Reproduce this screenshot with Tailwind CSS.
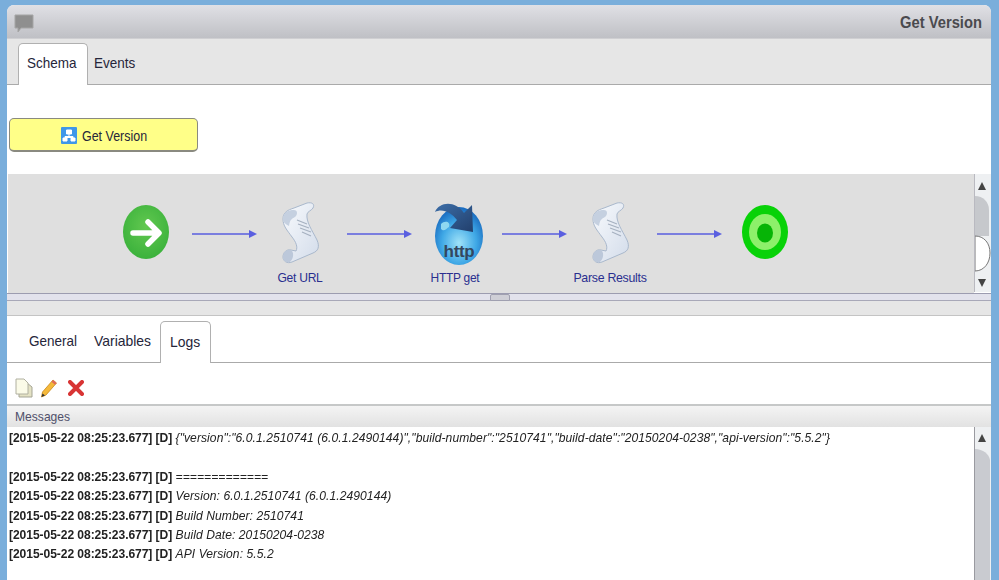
<!DOCTYPE html>
<html lang="en">
<head>
  <meta charset="UTF-8" />
  <title>Get Version</title>
  <script src="https://cdn.jsdelivr.net/npm/@tailwindcss/browser@4"></script>
</head>
<body class="bg-[#7aaedb] h-[580px] w-[999px] overflow-hidden font-['Liberation_Sans',Arial,sans-serif] text-[#25253a]">
  <svg width="0" height="0" class="absolute">
    <defs>
      <linearGradient id="paper" x1="0" y1="0" x2="1" y2="1">
        <stop offset="0" stop-color="#f8fafd" /><stop offset="1" stop-color="#d3dcea" />
      </linearGradient>
      <symbol id="scroll" viewBox="0 0 38 64">
        <path d="M1 17C1 10 6 8 12 6L25 1C30 0 33 2 31 6C29 9 26 9 25 12C24 20 30 28 35 38C38 45 36 49 31 51L10 60C5 62 1 59 1 55C1 50 5 47 9 48L14 49C16 45 14 40 10 35C5 28 1 24 1 17Z" fill="url(#paper)" stroke="#a9b8cc" stroke-width="1" />
        <path d="M1 17C1 10 6 8 12 8C15 8 16 11 14 14C11 17 8 16 7 24C3 22 1 20 1 17Z" fill="#c5d0e0" />
        <path d="M1 55C1 50 5 47 9 48C12 50 12 56 8 60C4 61 1 59 1 55Z" fill="#bcc8da" />
        <path d="M15 18L25 22M16 22L27 26M18 26L29 30M20 30L29 34" stroke="#a6b1c0" stroke-width="1.2" />
      </symbol>
    </defs>
  </svg>

  <!-- window -->
  <div class="ml-[7px] mt-[5px] w-[984px] h-[575px] bg-white rounded-t-[7px] flex flex-col overflow-hidden blur-[0.4px]">
    <div class="h-[34px] shrink-0 bg-gradient-to-b from-[#e0e0e5] to-[#bfc0c5] border-b border-[#cfcfd2] flex items-center justify-between pl-[7px] pr-[9px]">
      <svg width="20" height="19" viewBox="0 0 20 19" class="mt-[3px]"><path d="M1 1H19V14H7L4 18V14H1Z" fill="#8f8f8f" stroke="#a5a5a5" /></svg>
      <span class="text-[16px] font-bold text-[#4a4a4e] pt-[2px] scale-x-[.92] origin-right">Get Version</span>
    </div>

    <!-- top tabs -->
    <div class="h-[45px] shrink-0 bg-[#e6e6e6] border-b border-[#aaaaaa] flex items-end pl-[11px] box-content text-[14.5px]">
      <div class="h-[42px] w-[70px] bg-white border border-b-0 border-[#b0b0b0] rounded-t-[5px] flex items-center pl-[8px] pb-[2px] -mb-px"><span class="scale-x-[.93] origin-left">Schema</span></div>
      <div class="h-[41px] pl-[6px] flex items-center"><span class="scale-x-[.93] origin-left">Events</span></div>
    </div>

    <!-- button area -->
    <div class="h-[89px] shrink-0 pl-[2px] pt-[33px]">
      <div class="w-[189px] h-[34px] bg-[#ffff88] border border-[#8a8a80] border-b-2 rounded-[5px] flex items-center justify-center gap-[5px] text-[14px] pt-[2px]">
        <svg width="16" height="17" viewBox="0 0 16 17">
          <rect width="16" height="17" rx="1" fill="#3f97e8" />
          <path d="M5.5 3H10.5V7H5.5ZM2 11H6V14H2ZM10 11H14V14H10ZM8 7V9.5M4 11V9.5H12V11" fill="#fff" stroke="#fff" stroke-width="1" />
        </svg>
        <span class="w-[64px] whitespace-nowrap scale-x-[.89] origin-left pt-[1px]">Get Version</span>
      </div>
    </div>

    <!-- schema diagram -->
    <div class="h-[120px] shrink-0 flex pl-px border-b border-[#9c9cb0]">
      <div class="relative w-[966px] bg-[#dfdfdf] text-[13px] tracking-[-.3px] text-[#2a2f8f]">
        <svg class="absolute left-0 top-0" width="966" height="119" viewBox="0 0 966 119">
          <defs>
            <radialGradient id="startFill" cx=".5" cy=".4" r=".65"><stop offset="0" stop-color="#62c850" /><stop offset="1" stop-color="#38b03a" /></radialGradient>
            <radialGradient id="globe" cx=".5" cy=".62" r=".6"><stop offset="0" stop-color="#9fe2f8" /><stop offset=".6" stop-color="#3fa8e6" /><stop offset="1" stop-color="#1a6cc0" /></radialGradient>
            <linearGradient id="swoosh" x1="0" y1="0" x2="1" y2="1"><stop offset="0" stop-color="#3c6ea8" /><stop offset="1" stop-color="#223f6c" /></linearGradient>
          </defs>
          <!-- start -->
          <ellipse cx="138" cy="58" rx="23" ry="27" fill="url(#startFill)" />
          <path d="M125 59H149M140 48L151 59L140 70" fill="none" stroke="#fff" stroke-width="5.5" stroke-linecap="round" stroke-linejoin="round" />
          <!-- arrows -->
          <g stroke="#5a5fe0" stroke-width="1.3"><path d="M184 60H243M339 60H398M494 60H553M649 60H708" /></g>
          <g fill="#5a5fe0"><path d="M241 56L249 60L241 64ZM396 56L404 60L396 64ZM551 56L559 60L551 64ZM706 56L714 60L706 64Z" /></g>
          <!-- scrolls -->
          <use href="#scroll" x="274" y="28" width="38" height="64" />
          <use href="#scroll" x="584" y="28" width="38" height="64" />
          <!-- http globe -->
          <ellipse cx="451" cy="62" rx="24" ry="29" fill="url(#globe)" />
          <path d="M433 50C437 46 443 48 441 53C438 55 436 58 433 55Z" fill="#8fd8f0" />
          <path d="M427 38C431 28 447 26 456 39L464 31L465 58L442 54L449 46C443 38 434 34 427 38Z" fill="url(#swoosh)" />
          <text x="451" y="83" text-anchor="middle" font-family="Liberation Sans" font-weight="700" font-size="17" fill="#33475f">http</text>
          <!-- end -->
          <ellipse cx="757" cy="58" rx="23" ry="27" fill="#08d208" />
          <ellipse cx="757" cy="58" rx="16" ry="18" fill="#8df06a" />
          <ellipse cx="757" cy="59" rx="8" ry="9.5" fill="#06b406" />
        </svg>
        <span class="absolute left-[242px] w-[100px] top-[94px] text-center scale-x-[.93]">Get URL</span>
        <span class="absolute left-[397px] w-[100px] top-[94px] text-center scale-x-[.92]">HTTP get</span>
        <span class="absolute left-[552px] w-[100px] top-[94px] text-center scale-x-[.95]">Parse Results</span>
      </div>
      <!-- scrollbar -->
      <svg width="16" height="118" viewBox="0 0 16 118" class="bg-[#eef0f2] border-l border-[#b9b9c0] box-content">
        <path d="M4 7L8 15H0Z" transform="translate(3 1)" fill="#444" />
        <path d="M0 22C8 22 14 28 14 36V62H0Z" fill="#c6c8cc" />
        <path d="M0 62C9 62 15 69 15 79C15 89 9 97 0 97Z" fill="#fff" stroke="#777" />
        <path d="M3 105H11L7 113Z" fill="#444" />
      </svg>
    </div>

    <!-- splitter -->
    <div class="h-[22px] shrink-0 flex flex-col bg-[#e6e6e6] border-b border-[#c4c4c4] relative">
      <div class="h-[7px] bg-[#e2e2ec] border-b border-[#a8a8b8]"></div>
      <div class="absolute left-[483px] top-0 w-[20px] h-[7px] bg-[#cfcfd6] border border-[#a0a0b0] rounded-t-[2px]"></div>
    </div>

    <!-- bottom tabs -->
    <div class="h-[47px] shrink-0 bg-white border-b border-[#aaaaaa] flex items-end pl-[14px] text-[14.5px]">
      <div class="h-[41px] w-[64px] pl-[8px] pt-[1px] flex items-center"><span class="scale-x-[.93] origin-left">General</span></div>
      <div class="h-[41px] w-[75px] pl-[9px] pt-[1px] flex items-center"><span class="scale-x-[.96] origin-left">Variables</span></div>
      <div class="h-[42px] w-[51px] bg-white border border-b-0 border-[#b0b0b0] rounded-t-[5px] flex items-center pl-[9px] -mb-px"><span class="scale-x-[.96] origin-left">Logs</span></div>
    </div>

    <!-- toolbar -->
    <div class="h-[41px] shrink-0 flex items-center gap-[7px] pl-[8px] pt-[9px]">
      <svg width="18" height="20" viewBox="0 0 18 20">
        <path d="M4 5H12L17 9V19H4Z" fill="#e4e2c4" stroke="#a5a595" />
        <path d="M1 1H9L13 5V16H1Z" fill="#fbfbe8" stroke="#b0b0a0" />
      </svg>
      <svg width="18" height="20" viewBox="0 0 18 20">
        <path d="M13 2L16.5 5L6 17L1.5 19L2.5 14Z" fill="#f5b93a" stroke="#c8881c" stroke-width=".8" />
        <path d="M13 2L16.5 5L15 6.8L11.5 3.7Z" fill="#e06a5a" />
        <path d="M1.5 19L2.5 15.5L5 17.5Z" fill="#333" />
      </svg>
      <svg width="16" height="16" viewBox="0 0 16 16" class="ml-[3px]">
        <path d="M2 2L14 14M14 2L2 14" stroke="#d83434" stroke-width="4" stroke-linecap="round" />
      </svg>
    </div>

    <!-- messages header -->
    <div class="h-[23px] shrink-0 bg-gradient-to-b from-[#f4f4f4] to-[#e2e2e2] border-t-2 border-[#c6c8c8] pl-[8px] flex items-center text-[13px] text-[#50506a]"><span class="scale-x-[.93] origin-left">Messages</span></div>

    <!-- log -->
    <div class="flex-1 flex min-h-0">
      <div class="flex-1 pl-[2px] pt-[1px] text-[13px] leading-[19.4px] text-[#222]">
        <div class="whitespace-pre origin-left scale-x-[.93]"><b class="font-bold tracking-[-.08px]">[2015-05-22 08:25:23.677] [D]</b> <i class="tracking-[.07px]">{"version":"6.0.1.2510741 (6.0.1.2490144)","build-number":"2510741","build-date":"20150204-0238","api-version":"5.5.2"}</i></div>
        <div class="h-[19.4px]"></div>
        <div class="whitespace-pre origin-left scale-x-[.93]"><b class="font-bold tracking-[-.08px]">[2015-05-22 08:25:23.677] [D]</b> <i class="tracking-[.07px]">=============</i></div>
        <div class="whitespace-pre origin-left scale-x-[.93]"><b class="font-bold tracking-[-.08px]">[2015-05-22 08:25:23.677] [D]</b> <i class="tracking-[.07px]">Version: 6.0.1.2510741 (6.0.1.2490144)</i></div>
        <div class="whitespace-pre origin-left scale-x-[.93]"><b class="font-bold tracking-[-.08px]">[2015-05-22 08:25:23.677] [D]</b> <i class="tracking-[.07px]">Build Number: 2510741</i></div>
        <div class="whitespace-pre origin-left scale-x-[.93]"><b class="font-bold tracking-[-.08px]">[2015-05-22 08:25:23.677] [D]</b> <i class="tracking-[.07px]">Build Date: 20150204-0238</i></div>
        <div class="whitespace-pre origin-left scale-x-[.93]"><b class="font-bold tracking-[-.08px]">[2015-05-22 08:25:23.677] [D]</b> <i class="tracking-[.07px]">API Version: 5.5.2</i></div>
      </div>
      <svg width="16" height="154" viewBox="0 0 16 154" class="bg-[#eef0f2] border-l border-[#9a9aa0] box-content shrink-0">
        <path d="M7 7L11 15H3Z" fill="#444" />
        <path d="M0 22C8 22 14 27 15 33V154H0Z" fill="#c9cbd0" />
      </svg>
    </div>
  </div>
</body>
</html>
